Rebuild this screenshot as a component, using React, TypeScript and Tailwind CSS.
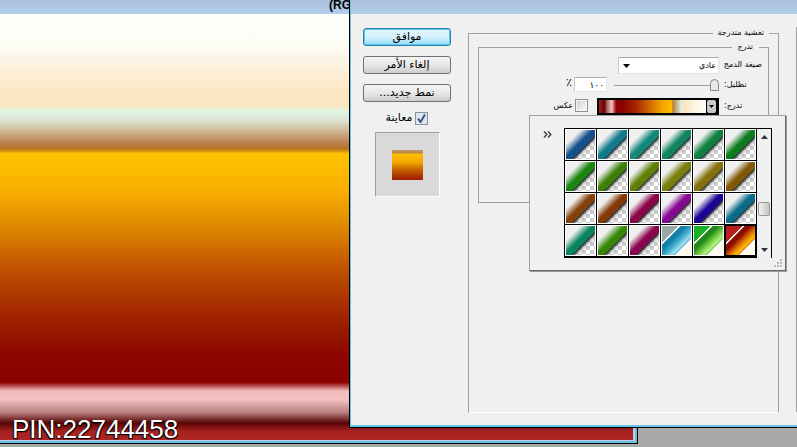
import { useState } from "react";
import clsx from "clsx";

// base colours of the preset gradients, row by row
const glossy = [
  "#14508c", "#127a8c", "#14897a", "#128462", "#108040", "#0c7c1c",
  "#1c8410", "#3c8008", "#5e8008", "#7a7e0c", "#84700c", "#825808",
  "#844008", "#843804", "#8c0448", "#880894", "#1c0496", "#086c8a",
  "#088460", "#368804", "#8c0450",
];

const metallic = [
  { name: "sky", corner: "#9aa8a8", deep: "#1580a8", mid: "#4ab0d0", light: "#a8e4f0" },
  { name: "leaf", corner: "#1ab028", deep: "#208818", mid: "#70c840", light: "#b8f488" },
  { name: "fire", corner: "#b82020", deep: "#8c0c00", mid: "#dc6c00", light: "#ffc400" },
];

function GlossySwatch({ color, index }: { color: string; index: number }) {
  return (
    <svg viewBox="0 0 29 29" className="block size-[29px]">
      <defs>
        <pattern id="checker" width="8" height="8" patternUnits="userSpaceOnUse">
          <rect width="8" height="8" fill="#fff" />
          <rect width="4" height="4" fill="#ccc" />
          <rect x="4" y="4" width="4" height="4" fill="#ccc" />
        </pattern>
        <linearGradient id={`g${index}`} gradientUnits="userSpaceOnUse" x1="0" y1="0" x2="29" y2="29">
          <stop offset="0" stopColor="#f0f0f0" />
          <stop offset="0.25" stopColor="#f0f0f0" />
          <stop offset="0.46" stopColor={color} />
          <stop offset="0.58" stopColor={color} />
          <stop offset="0.63" stopColor="#10181c" stopOpacity="0.8" />
          <stop offset="0.66" stopColor="#333" stopOpacity="0.3" />
          <stop offset="0.76" stopColor="#888" stopOpacity="0" />
        </linearGradient>
      </defs>
      <rect width="29" height="29" fill="url(#checker)" />
      <path d="M0 0H29V7L7 29H0Z" fill="#f0f0f0" />
      <rect width="29" height="29" fill={`url(#g${index})`} />
    </svg>
  );
}

function MetallicSwatch({ name, corner, deep, mid, light }: (typeof metallic)[number]) {
  return (
    <svg viewBox="0 0 29 29" className="block size-[29px]">
      <defs>
        <linearGradient id={name} gradientUnits="userSpaceOnUse" x1="0" y1="0" x2="29" y2="29">
          <stop offset="0" stopColor={corner} />
          <stop offset="0.28" stopColor={corner} />
          <stop offset="0.29" stopColor="#fff" />
          <stop offset="0.31" stopColor="#fff" />
          <stop offset="0.33" stopColor={deep} />
          <stop offset="0.42" stopColor={deep} />
          <stop offset="0.55" stopColor={mid} />
          <stop offset="0.68" stopColor={light} />
          <stop offset="0.7" stopColor={mid} />
          <stop offset="0.74" stopColor="#fff" />
          <stop offset="0.86" stopColor="#fff8e4" />
          <stop offset="1" stopColor="#fff" />
        </linearGradient>
      </defs>
      <rect width="29" height="29" fill={`url(#${name})`} />
    </svg>
  );
}

function PushButton({ label, primary }: { label: string; primary?: boolean }) {
  return (
    <button
      type="button"
      className={clsx(
        "h-[18px] w-full rounded-[3px] border text-center text-[11px] leading-4",
        primary
          ? "border-[#2c7fa8] bg-linear-to-b from-[#e4f6fd] via-[#d6f1fc] to-[#8fdcf8] ring-1 ring-[#5cc8f0] ring-inset"
          : "border-[#707070] bg-linear-to-b from-[#f4f4f4] via-[#e8e8e8] to-[#cccccc]"
      )}
    >
      {label}
    </button>
  );
}

function DocumentWindow() {
  return (
    <section className="flex h-screen flex-col pr-[159px] pb-[3px]" dir="ltr">
      <div className="flex min-h-0 flex-1 flex-col border-r border-b border-black">
        <header className="h-[14px] bg-linear-to-b from-[#a8bedb] to-[#b2cfec] pl-[329px] text-[12px] leading-[10px] font-bold">
          (RG
        </header>
        <div className="flex min-h-0 flex-1 flex-col border-r-2 border-b-2 border-[#62c4e4] bg-[#c8c8e4] pr-[2px] pb-px">
          <div className="flex flex-1 items-end bg-[linear-gradient(to_bottom,#fffffa_0%,#fdfdf6_7%,#fcf2e0_12%,#fde5c2_19%,#f9e7c0_21.5%,#dff5e6_23%,#d8dcc6_25.5%,#bc7c46_30.5%,#bb7423_31.7%,#ffc400_32.8%,#f9b000_41%,#de8800_50%,#c05000_60%,#a02400_71%,#8c0600_80%,#8c0000_86.5%,#f2bcbc_88.5%,#f4c0c0_90.5%,#b88080_93.5%,#580404_96%,#a82222_98%,#ae2626_100%)]">
            <p className="pl-3 text-[26px] leading-[22px] text-white [text-shadow:-1px_1px_1px_#000,1px_1px_1px_#000]">
              PIN:22744458
            </p>
          </div>
        </div>
      </div>
    </section>
  );
}

function ActionColumn() {
  const [preview, setPreview] = useState(true);
  return (
    <div className="flex w-[88px] shrink-0 flex-col gap-[10px] pt-[2px]">
      <PushButton label="موافق" primary />
      <PushButton label="إلغاء الأمر" />
      <PushButton label="نمط جديد..." />
      <div className="flex flex-col items-center gap-2">
        <label className="flex h-3 items-center gap-[3px] text-[11px]">
          <span className="grid size-[13px] place-items-center">
            <input
              type="checkbox"
              checked={preview}
              onChange={(e) => setPreview(e.target.checked)}
              className="peer col-start-1 row-start-1 size-[13px] appearance-none border border-[#8a94a0] bg-[#dfe6f0]"
            />
            <svg
              viewBox="0 0 9 9"
              className="pointer-events-none col-start-1 row-start-1 hidden size-[9px] peer-checked:block"
            >
              <path d="M1 4.5L3.5 8L8 0.5" fill="none" stroke="#3c5484" strokeWidth="2" />
            </svg>
          </span>
          معاينة
        </label>
        <div className="grid size-[65px] place-items-center border border-t-[#a0a0a0] border-r-white border-b-white border-l-[#a0a0a0] bg-[#d9d9d9]">
          <div className="h-[30px] w-[31px] bg-[linear-gradient(to_bottom,#c09870_0,#c08440_3px,#fcc000_4px,#f4a800_12px,#c05800_21px,#a01c00_30px)]" />
        </div>
      </div>
    </div>
  );
}

function GradientSettings() {
  const [opacity, setOpacity] = useState(100);
  return (
    <fieldset className="h-[387px] min-w-0 flex-1 border border-[#a0a0a0] border-b-white px-[9px] text-[8px]">
      <legend className="h-[14px] px-[5px] leading-[14px]">تغشية متدرجة</legend>
      <fieldset className="h-[163px] min-w-0 border border-[#a0a0a0] px-[6px] pt-[3px]">
        <legend className="mr-[3px] h-[14px] px-[6px] leading-[14px]">تدرج</legend>
        <div className="grid grid-cols-[38px_122px_auto] gap-x-[5px]">
          <label htmlFor="blend" className="h-5 text-left leading-4 whitespace-nowrap">
            صيغة الدمج
          </label>
          <div className="col-span-2 h-5">
            <div className="relative w-[101px]">
              <select
                id="blend"
                className="block h-[17px] w-full appearance-none border border-t-[#a8a8a8] border-r-[#e4e4e4] border-b-[#e4e4e4] border-l-[#c8c8c8] bg-white pr-[2px] leading-[15px]"
              >
                <option>عادي</option>
              </select>
              <svg viewBox="0 0 7 4" className="pointer-events-none absolute top-[7px] left-[5px] h-1 w-[7px]">
                <path d="M0 0H7L3.5 4Z" />
              </svg>
            </div>
          </div>

          <label htmlFor="opacity" className="h-[21px] text-left leading-4">
            تظليل:
          </label>
          <div className="col-span-2 flex h-[21px] items-start gap-[7px]">
            <input
              type="range"
              dir="ltr"
              aria-label="تظليل"
              value={opacity}
              onChange={(e) => setOpacity(Number(e.target.value))}
              className="h-4 w-[105px] appearance-none bg-[linear-gradient(#a0a0a0,#a0a0a0)] bg-[length:100%_1px] bg-center bg-no-repeat [&::-webkit-slider-thumb]:h-3 [&::-webkit-slider-thumb]:w-[9px] [&::-webkit-slider-thumb]:appearance-none [&::-webkit-slider-thumb]:rounded-t-full [&::-webkit-slider-thumb]:rounded-b-xs [&::-webkit-slider-thumb]:border [&::-webkit-slider-thumb]:border-[#888] [&::-webkit-slider-thumb]:bg-[#e8e8e8]"
            />
            <div className="flex items-start gap-[2px]">
              <input
                id="opacity"
                defaultValue="١٠٠"
                className="h-[15px] w-[33px] border border-t-[#b0b0b0] border-r-[#e4e4e4] border-b-[#e4e4e4] border-l-[#c8c8c8] bg-white px-[2px] text-[9px]"
              />
              <span className="text-[11px] leading-3">٪</span>
            </div>
          </div>

          <span className="text-left leading-4">تدرج:</span>
          <button type="button" aria-label="تدرج" className="flex h-[17px] border-2 border-black" dir="ltr">
            <span className="h-full flex-1 bg-[linear-gradient(to_right,#a81c1c_0%,#600404_5%,#b07070_8%,#f4c0c0_12%,#8c0000_16%,#8c0000_22%,#a82800_35%,#d87800_50%,#f4a800_60%,#ffbc00_68%,#bb7c30_69%,#c8b898_73%,#e0f0e0_77%,#fce4c0_80%,#fdf3e0_88%,#fffffa_100%)]" />
            <span className="grid h-full w-[11px] place-items-center bg-black">
              <span className="grid h-[13px] w-[9px] place-items-center rounded-xs bg-[#c8c8c8]">
                <svg viewBox="0 0 5 3" className="h-[3px] w-[5px]">
                  <path d="M0 0H5L2.5 3Z" />
                </svg>
              </span>
            </span>
          </button>
          <label className="mr-1 flex h-[15px] items-center gap-[2px]">
            <input
              type="checkbox"
              className="size-[13px] shrink-0 appearance-none border border-[#8e8f8f] bg-linear-to-br from-[#cccccc] to-white ring-1 ring-[#f4f4f4] ring-inset"
            />
            عكس
          </label>
        </div>
      </fieldset>
    </fieldset>
  );
}

function PresetPicker() {
  return (
    <div
      dir="ltr"
      className="absolute top-[115px] right-[11px] flex items-start border border-t-[#a0a0a0] border-r-[#686868] border-b-[#686868] border-l-[#a0a0a0] bg-[#f0f0f0] pt-3 pr-[13px] pb-3 pl-[13px] shadow-[1px_1px_0_#9a9a9a]"
    >
      <button type="button" aria-label="قائمة" className="mt-[2px] mr-3 size-[9px]">
        <svg viewBox="0 0 9 9" className="block size-[9px]">
          <path d="M1 1.5L3.8 4.5L1 7.5M5 1.5L7.8 4.5L5 7.5" fill="none" stroke="#444" strokeWidth="1.5" />
        </svg>
      </button>
      <div className="flex border-t border-r border-black">
        <div className="grid grid-cols-6 gap-px border-b border-l border-black bg-black pr-px pb-px">
          {glossy.map((color, i) => (
            <button key={i} type="button" aria-label={color} className="size-[31px] border border-white">
              <GlossySwatch color={color} index={i} />
            </button>
          ))}
          {metallic.map((preset) => (
            <button
              key={preset.name}
              type="button"
              aria-label={preset.name}
              className={clsx("size-[31px] border", preset.name === "fire" ? "border-black" : "border-white")}
            >
              <MetallicSwatch {...preset} />
            </button>
          ))}
        </div>
        <div className="flex w-[14px] flex-col items-center pt-[6px] pb-[6px]">
          <svg viewBox="0 0 7 4" className="h-1 w-[7px]">
            <path d="M0 4H7L3.5 0Z" fill="#333" />
          </svg>
          <div className="mt-[63px] h-[14px] w-3 rounded-xs border border-[#999] bg-linear-to-r from-[#f4f4f4] to-[#c4c4c4]" />
          <svg viewBox="0 0 7 4" className="mt-auto h-1 w-[7px]">
            <path d="M0 0H7L3.5 4Z" fill="#333" />
          </svg>
        </div>
      </div>
      <svg viewBox="0 0 9 9" className="absolute right-[2px] bottom-[2px] size-[9px]">
        <path
          d="M6 0h2v2h-2zM3 3h2v2h-2zM6 3h2v2h-2zM0 6h2v2h-2zM3 6h2v2h-2zM6 6h2v2h-2z"
          fill="#b8b8b8"
        />
      </svg>
    </div>
  );
}

export default function App() {
  return (
    <main className="relative min-h-screen overflow-hidden bg-[#a9a9a9] font-['Liberation_Sans','DejaVu_Sans',sans-serif] text-black">
      <DocumentWindow />
      <section
        dir="rtl"
        className="absolute top-0 right-0 left-[349px] border-b border-l border-black bg-[#f0f0f0] font-['DejaVu_Sans',sans-serif]"
      >
        <div className="border-b-2 border-l border-[#6cc4e4]">
          <header className="h-[14px] bg-linear-to-b from-[#a8bedb] to-[#b2cfec]" />
          <div dir="ltr" className="flex items-start gap-[17px] pt-3 pb-3 pl-3">
            <div dir="rtl">
              <ActionColumn />
            </div>
            <div dir="rtl" className="flex min-w-0 flex-1">
              <GradientSettings />
            </div>
            <div className="mt-px h-[385px] w-px bg-[#a0a0a0]" />
          </div>
        </div>
        <PresetPicker />
      </section>
    </main>
  );
}
